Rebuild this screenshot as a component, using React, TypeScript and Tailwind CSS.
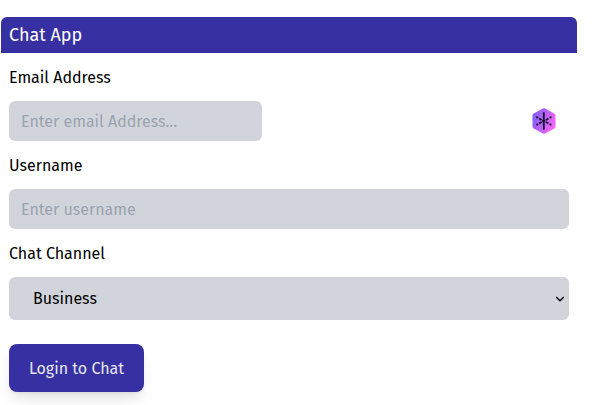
import React from "react";

const fieldClass =
  "block h-10 rounded-md bg-[#d1d5db] px-3 text-base text-black outline-none placeholder:text-[#9ca3af] placeholder:opacity-100";

const labelClass = "h-6 leading-[26px]";

function AutofillBadge() {
  return (
    <svg className="mr-[13px] h-[26px] w-6" viewBox="0 0 24 26" fill="none" aria-hidden="true">
      <defs>
        <linearGradient id="badge" x1="0" y1="8" x2="24" y2="18" gradientUnits="userSpaceOnUse">
          <stop stopColor="#7f5cff" />
          <stop offset="1" stopColor="#ff66f5" />
        </linearGradient>
      </defs>
      <path
        d="M10.8 0.6Q12 0 13.2 0.6L22.6 5.8Q23.5 6.4 23.5 7.5V18.5Q23.5 19.6 22.6 20.2L13.2 25.4Q12 26 10.8 25.4L1.4 20.2Q0.5 19.6 0.5 18.5V7.5Q0.5 6.4 1.4 5.8Z"
        fill="url(#badge)"
      />
      <g stroke="#15102b">
        <path d="M11.8 4.3V21.7" strokeWidth="1.8" />
        <path
          d="M7.2 10.6L9.7 12M16.4 10.6L13.9 12M7.2 15.4L9.7 14M16.4 15.4L13.9 14"
          strokeWidth="1.8"
        />
        <path d="M10 13H13.6" strokeWidth="1.4" />
      </g>
      <g fill="#15102b">
        <circle cx="5.2" cy="9.4" r="1.15" />
        <circle cx="18.5" cy="9.4" r="1.15" />
        <circle cx="5.2" cy="16.6" r="1.15" />
        <circle cx="18.5" cy="16.6" r="1.15" />
      </g>
    </svg>
  );
}

export default function App() {
  return (
    <div className="h-[405px] overflow-hidden bg-white pt-[17px] pl-px font-['Fira_Sans','Noto_Sans',sans-serif] text-base text-black">
      <div className="w-[576px]">
        <h1 className="rounded-t-md bg-[#3730a3] px-2 py-1 text-lg leading-7 text-white">
          Chat App
        </h1>
        <form className="flex flex-col gap-3 px-2 pt-3" onSubmit={(e) => e.preventDefault()}>
          <label htmlFor="email" className={labelClass}>Email Address</label>
          <div className="flex items-center justify-between">
            <input id="email" type="email" placeholder="Enter email Address..." className={`${fieldClass} w-[253px]`} />
            <AutofillBadge />
          </div>
          <label htmlFor="username" className={labelClass}>Username</label>
          <input id="username" type="text" placeholder="Enter username" className={`${fieldClass} w-full`} />
          <label htmlFor="channel" className={labelClass}>Chat Channel</label>
          <div className="grid items-center">
            <select id="channel" className="col-start-1 row-start-1 h-[43px] w-full appearance-none rounded-md bg-[#d1d5db] pr-8 pl-6 text-base outline-none">
              <option>Business</option>
            </select>
            <svg className="pointer-events-none col-start-1 row-start-1 mr-1 h-[6px] w-[10px] justify-self-end" viewBox="0 0 10 6" fill="none" stroke="black" strokeWidth="1.5">
              <path d="M1.2 1L5 4.8L8.8 1" />
            </svg>
          </div>
          <button className="mt-3 h-12 w-[135px] rounded-lg bg-[#3730a3] pt-0.5 text-[#e5e7eb] shadow-lg">
            Login to Chat
          </button>
        </form>
      </div>
    </div>
  );
}
